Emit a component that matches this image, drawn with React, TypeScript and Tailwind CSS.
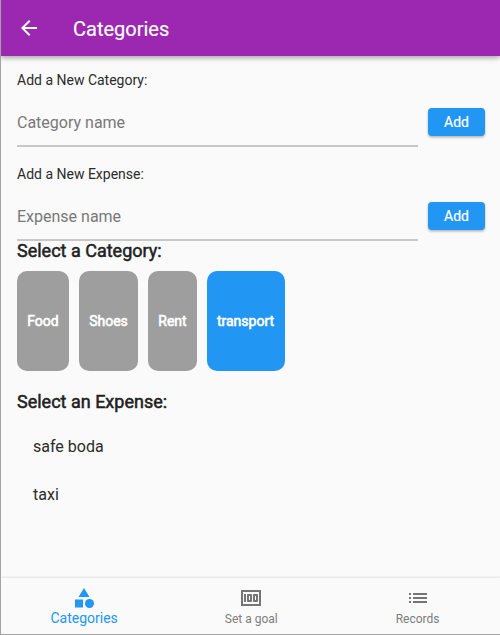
import { MdArrowBack, MdCategory, MdList, MdMoney } from "react-icons/md";

const categories = [
  { name: "Food", width: "w-[52px]", color: "bg-[#9e9e9e]" },
  { name: "Shoes", width: "w-[59px]", color: "bg-[#9e9e9e]" },
  { name: "Rent", width: "w-[49px]", color: "bg-[#9e9e9e]" },
  { name: "transport", width: "w-[78px] pr-px", color: "bg-[#2196f3]" },
];

function EntryRow({ placeholder }: { placeholder: string }) {
  return (
    <div className="flex h-12 items-center gap-[10px]">
      <div className="flex h-12 w-[401px] items-center border-b-2 border-[#c8c8c8] pt-px text-base text-[#787878]">
        {placeholder}
      </div>
      <button className="mb-[2px] h-7 w-[57px] rounded bg-[#2196f3] text-sm leading-7 text-white shadow-[0_2px_2px_rgba(0,0,0,0.12),0_1px_3px_rgba(0,0,0,0.18)] [-webkit-text-stroke:0.2px_white]">
        Add
      </button>
    </div>
  );
}

export default function App() {
  return (
    <div className="flex h-[635px] w-[500px] flex-col overflow-hidden border-b border-l border-[#a3a3a3] bg-[#fafafa] font-['Roboto',sans-serif] text-[#2b2b2b]">
      <header className="flex h-14 shrink-0 items-center bg-[#9c27b0] pl-4 text-white shadow-[0_2px_4px_rgba(0,0,0,0.22),0_2px_7px_rgba(0,0,0,0.14)]">
        <MdArrowBack className="size-6" />
        <h1 className="ml-8 pt-0.5 text-xl leading-7 [-webkit-text-stroke:0.15px_white]">Categories</h1>
      </header>

      <main className="flex flex-1 flex-col pt-4 pl-4">
        <p className="h-[27px] text-sm leading-4">Add a New Category:</p>
        <EntryRow placeholder="Category name" />
        <p className="mt-[19px] h-[27px] text-sm leading-4">Add a New Expense:</p>
        <EntryRow placeholder="Expense name" />
        <h2 className="h-[30px] text-lg leading-5 text-[#212121] [-webkit-text-stroke:0.5px_#212121]">Select a Category:</h2>
        <div className="flex h-[100px] gap-[10px]">
          {categories.map((item) => (
            <div
              key={item.name}
              className={`flex items-center justify-center rounded-[10px] text-sm text-white [-webkit-text-stroke:0.6px_white] ${item.width} ${item.color}`}
            >
              {item.name}
            </div>
          ))}
        </div>
        <h2 className="mt-5 text-lg leading-[21px] text-[#212121] [-webkit-text-stroke:0.5px_#212121]">Select an Expense:</h2>
        <ul className="mt-[11px] pl-4 text-base">
          <li className="flex h-12 items-center">safe boda</li>
          <li className="flex h-12 items-center">taxi</li>
        </ul>
      </main>

      <nav className="grid h-14 shrink-0 grid-cols-3 bg-[#fafafa] text-[#757575] shadow-[0_-1px_2px_rgba(0,0,0,0.1)]">
        <div className="flex flex-col items-center pt-2 text-[#2196f3]">
          <MdCategory className="size-6" />
          <span className="text-sm leading-4">Categories</span>
        </div>
        <div className="flex flex-col items-center pt-2 pl-[1.5px]">
          <MdMoney className="size-6" />
          <span className="pt-px text-xs leading-4 text-[#7d7d7d]">Set a goal</span>
        </div>
        <div className="flex flex-col items-center pt-2 pl-[1.5px]">
          <MdList className="size-6" />
          <span className="pt-px text-xs leading-4 text-[#7d7d7d]">Records</span>
        </div>
      </nav>
    </div>
  );
}
